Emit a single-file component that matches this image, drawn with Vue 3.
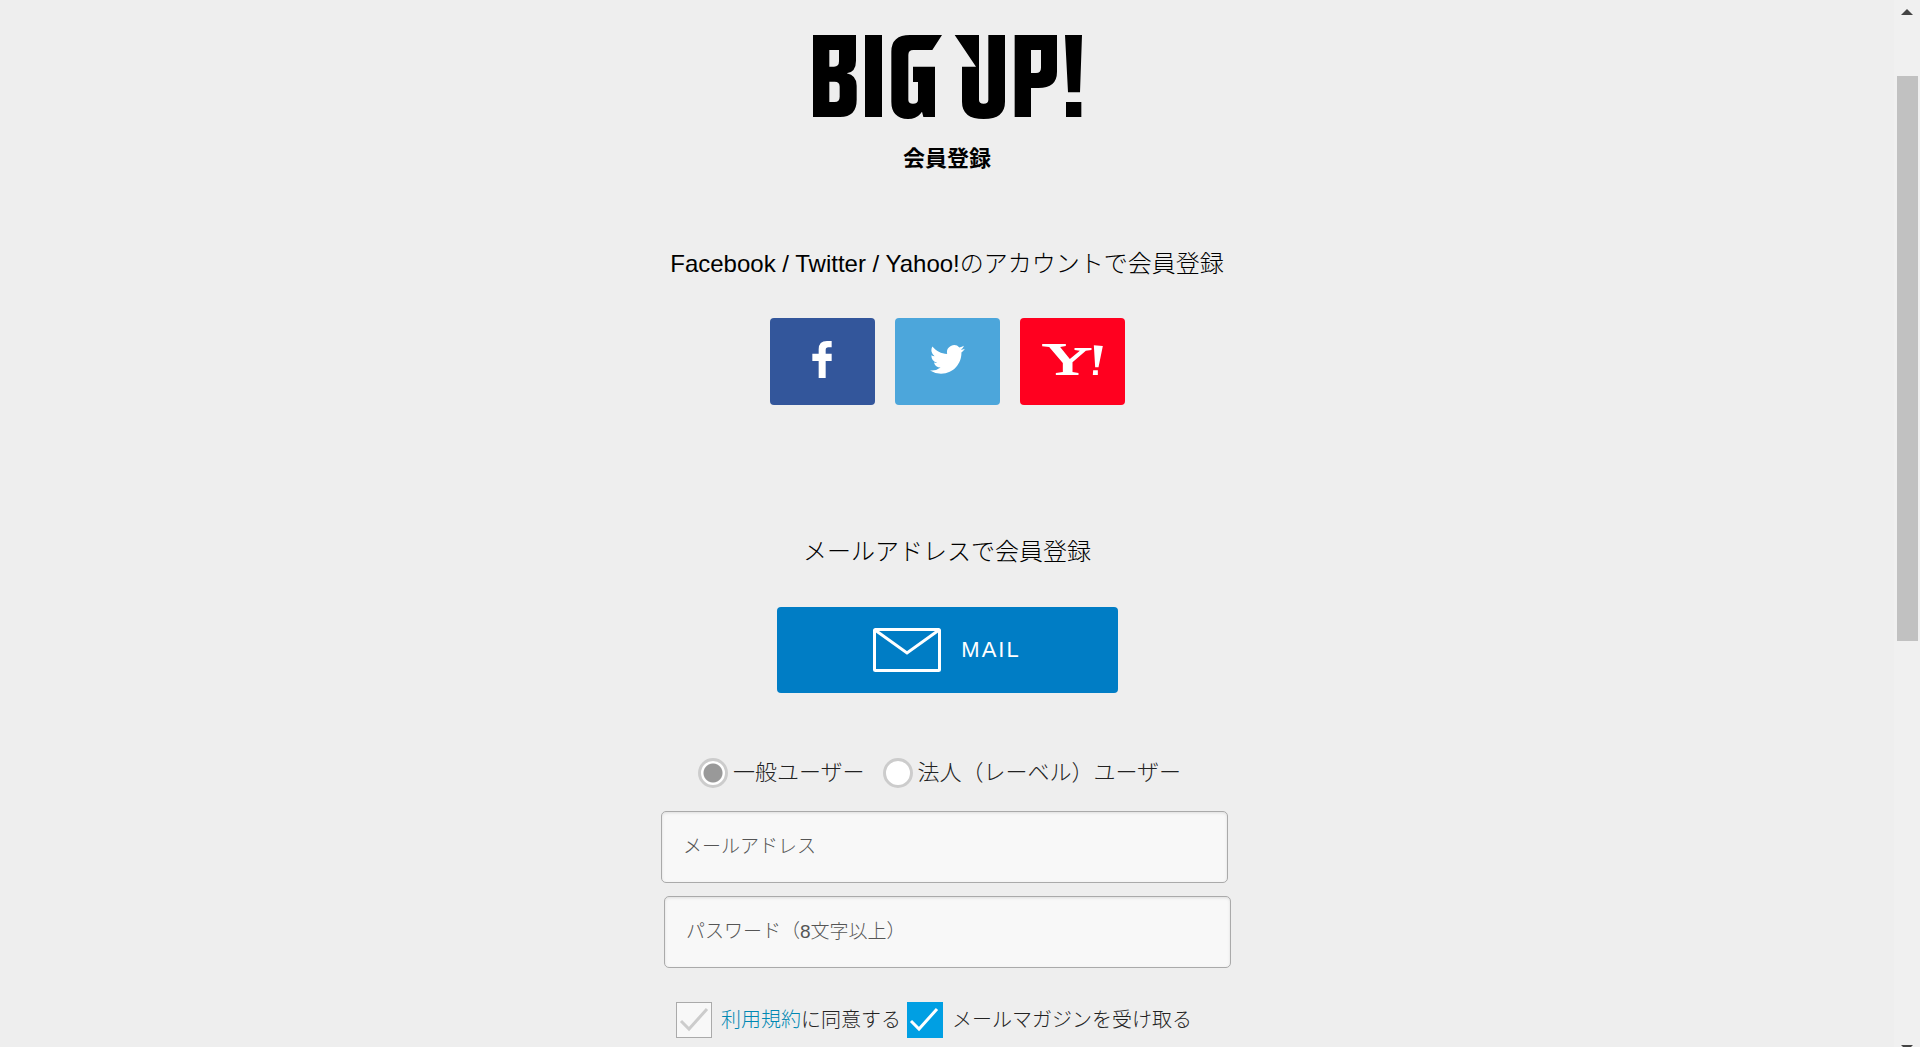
<script setup>
import { ref } from 'vue'

const userType = ref('general')
const email = ref('')
const password = ref('')
const agreed = ref(false)
const magazine = ref(true)
</script>

<template>
  <div class="shell">
    <main class="page">
      <h1 class="logo">
        <svg viewBox="69 45 807 252" role="img" aria-label="BIG UP!">
          <g fill-rule="evenodd">
            <path d="M69 45H198V122Q198 156 170 160Q200 166 200 197V240Q200 291 150 291H69ZM118 90V140H132Q147 140 147 124V90ZM118 185V246H134Q149 246 149 230V200Q149 185 134 185Z" />
            <path d="M225 45H276V291H225Z" />
            <path d="M360 45H456L427 90H370Q355 90 355 105V240Q355 251 369 251Q384 251 384 240V186H369V140H435V291H400L396 275L390 283Q378 297 354 297Q304 295 304 245V95Q304 45 360 45Z" />
            <path d="M494 45H567V240Q567 251 581 251Q595 251 595 240V45H645V245Q645 297 581 297Q516 297 516 245V140H558Z" />
            <path d="M674 45H801V155Q801 204 745 204H723V291H674ZM723 90V159H738Q753 159 753 143V90Z" />
            <path d="M825 45H876L870 217H834ZM828 246H874V291H828Z" />
          </g>
        </svg>
      </h1>
      <h2 class="title">会員登録</h2>

      <section class="social">
        <h3 class="lead">Facebook / Twitter / Yahoo!のアカウントで会員登録</h3>
        <div class="social-buttons">
          <button type="button" class="brand facebook" aria-label="Facebook">
            <svg width="20" height="37" viewBox="188 120 58 111">
              <path d="M207 231V180H188V158H207V145Q207 120 232 120H246V139H236Q228 139 228 147V158H246V180H228V231Z" />
            </svg>
          </button>
          <button type="button" class="brand twitter" aria-label="Twitter">
            <svg width="35" height="35" viewBox="0 0 24 24">
              <path d="M23.95 4.57a10 10 0 0 1-2.82.77 4.96 4.96 0 0 0 2.16-2.72c-.95.55-2 .96-3.13 1.18a4.92 4.92 0 0 0-8.38 4.48C7.69 8.1 4.07 6.13 1.64 3.16a4.92 4.92 0 0 0 1.52 6.57 4.9 4.9 0 0 1-2.23-.61v.06a4.92 4.92 0 0 0 3.95 4.83 5 5 0 0 1-2.21.08 4.94 4.94 0 0 0 4.6 3.42A9.87 9.87 0 0 1 0 19.54a13.99 13.99 0 0 0 7.55 2.21c9.05 0 14-7.5 14-13.98 0-.21 0-.42-.02-.63a9.94 9.94 0 0 0 2.42-2.57z" />
            </svg>
          </button>
          <button type="button" class="brand yahoo" aria-label="Yahoo!">
            <svg width="61" height="31" viewBox="877 129 182 93">
              <path d="M877 129H948V135L931 138L960 174L990 149L974 147V141H1025V147L1008 149L968 184V213L986 216V222H918V216L939 213V186L898 138L877 136Z" />
              <path d="M1032 133L1059 135L1046 199H1036ZM1030 208H1044V222H1029Z" />
            </svg>
          </button>
        </div>
      </section>

      <section class="mail">
        <h3 class="lead">メールアドレスで会員登録</h3>
        <button type="button" class="mail-button">
          <svg width="68" height="44" viewBox="0 0 68 44" aria-hidden="true">
            <rect x="1.5" y="1.5" width="65" height="41" rx="1" />
            <path d="M2 2L34 25L66 2" />
          </svg>
          <span>MAIL</span>
        </button>
      </section>

      <form class="form" @submit.prevent>
        <div class="radios">
          <label><input v-model="userType" type="radio" name="user-type" value="general" />一般ユーザー</label>
          <label><input v-model="userType" type="radio" name="user-type" value="label" />法人（レーベル）ユーザー</label>
        </div>
        <input v-model="email" class="field" type="email" placeholder="メールアドレス" aria-label="メールアドレス" />
        <input v-model="password" class="field field-password" type="password" placeholder="パスワード（8文字以上）" aria-label="パスワード" />
        <div class="checks">
          <span class="check">
            <input id="agree" v-model="agreed" type="checkbox" aria-label="利用規約に同意する" />
            <svg class="tick" viewBox="0 0 36 36" aria-hidden="true"><path d="M5 19L13 27L31 7" /></svg>
            <span><a href="#terms">利用規約</a><label for="agree">に同意する</label></span>
          </span>
          <span class="check">
            <input id="magazine" v-model="magazine" type="checkbox" />
            <svg class="tick" viewBox="0 0 36 36" aria-hidden="true"><path d="M4 19L12 27L30 7" /></svg>
            <label for="magazine">メールマガジンを受け取る</label>
          </span>
        </div>
      </form>
    </main>

    <div class="scrollbar" aria-hidden="true">
      <i class="arrow up"></i>
      <i class="thumb"></i>
      <i class="arrow down"></i>
    </div>
  </div>
</template>

<style>
body {
  margin: 0;
  background: #eee;
}
</style>

<style scoped>
* {
  box-sizing: border-box;
}

.shell {
  display: flex;
  height: 100vh;
  overflow: hidden;
  background: #eee;
  color: #000;
  font-family: "Liberation Sans", "Noto Sans CJK JP", sans-serif;
  font-weight: 300;
}

.page {
  display: flex;
  flex: 1;
  flex-direction: column;
  align-items: center;
  padding-top: 35px;
}

h1,
h2,
h3 {
  margin: 0;
}

.logo {
  height: 84px;
}

.logo svg {
  display: block;
  width: 269px;
  height: 84px;
}

.title {
  margin-top: 24px;
  font-size: 22px;
  line-height: 32px;
}

.lead {
  font-size: 24px;
  font-weight: 300;
  line-height: 36px;
}

.social {
  margin-top: 71px;
}

.social-buttons {
  display: flex;
  justify-content: center;
  gap: 20px;
  margin-top: 36px;
}

button {
  border: 0;
  border-radius: 4px;
  cursor: pointer;
  font-family: inherit;
}

.brand {
  display: flex;
  align-items: center;
  justify-content: center;
  width: 105px;
  height: 87px;
  padding: 0 0 5px;
}

.brand svg {
  fill: #fff;
}

.facebook {
  background: #33569b;
}

.twitter {
  background: #4ca6db;
}

.yahoo {
  background: #ff001f;
}

.mail {
  display: flex;
  flex-direction: column;
  align-items: center;
  gap: 37px;
  margin-top: 129px;
}

.mail-button {
  display: flex;
  align-items: center;
  justify-content: center;
  gap: 20px;
  width: 341px;
  height: 86px;
  padding: 0;
  background: #007dc5;
  color: #fff;
  font-size: 22px;
  letter-spacing: 2px;
}

.mail-button svg {
  fill: none;
  stroke: #fff;
  stroke-width: 3;
}

.form {
  display: flex;
  flex-direction: column;
  width: 572px;
  margin-top: 62px;
  color: #222;
}

.radios {
  display: flex;
  gap: 18px;
  padding-left: 37px;
  font-size: 22px;
  line-height: 36px;
  white-space: nowrap;
}

.radios label {
  display: flex;
  align-items: center;
  gap: 5px;
}

.radios input {
  appearance: none;
  width: 30px;
  height: 30px;
  margin: 0;
  border: 3px solid #ccc;
  border-radius: 50%;
  background: #fff;
}

.radios input:checked {
  background: radial-gradient(circle, #999 9px, #fff 10px);
}

.field {
  width: 567px;
  height: 72px;
  margin-top: 20px;
  padding: 0 21px;
  border: 1px solid #aaa;
  border-radius: 5px;
  background: #f8f8f8;
  box-shadow: inset 0 1px 3px #ddd;
  color: #222;
  font-family: inherit;
  font-size: 19px;
  font-weight: 300;
}

.field::placeholder {
  color: #555;
  opacity: 1;
}

.field-password {
  margin-top: 13px;
  margin-left: 3px;
}

.checks {
  display: flex;
  gap: 6px;
  margin-top: 34px;
  padding-left: 15px;
  font-size: 20px;
  line-height: 36px;
  white-space: nowrap;
}

.check {
  position: relative;
  display: flex;
  align-items: center;
  gap: 9px;
}

.check input {
  appearance: none;
  width: 36px;
  height: 36px;
  margin: 0;
  border: 1px solid #aaa;
  background: #f8f8f8;
}

.check input:checked {
  border-color: #009fe3;
  background: #009fe3;
}

.tick {
  position: absolute;
  top: 0;
  left: 0;
  width: 36px;
  height: 36px;
  fill: none;
  stroke: #ccc;
  stroke-width: 3;
  pointer-events: none;
}

.check input:checked + .tick {
  stroke: #fff;
}

.check a {
  color: #0088b3;
  text-decoration: none;
}

.scrollbar {
  display: flex;
  flex-direction: column;
  align-items: center;
  width: 26px;
  padding-top: 9px;
  background: #f0f0f0;
}

.arrow {
  border: 6px solid transparent;
}

.up {
  border-top: 0;
  border-bottom-color: #444;
}

.thumb {
  width: 21px;
  height: 54vh;
  margin-top: 61px;
  background: #c1c1c1;
}

.down {
  margin-top: auto;
  margin-bottom: -4px;
  border-bottom: 0;
  border-top-color: #444;
}
</style>
